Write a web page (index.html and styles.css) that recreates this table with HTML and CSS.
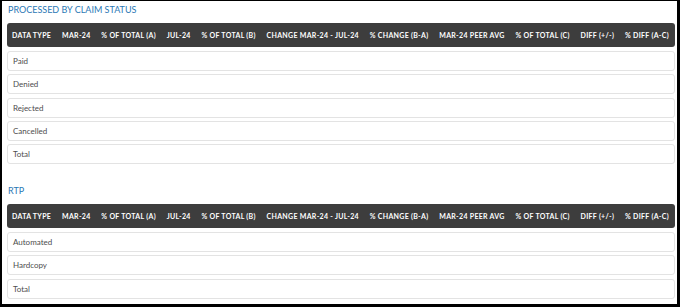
FILE: index.html
```html
<!DOCTYPE html>
<html>
<head>
<meta charset="utf-8">
<link rel="stylesheet" href="styles.css">
</head>
<body>
<div class="frame">
  <section class="section first">
    <h2 class="section-title">PROCESSED BY CLAIM STATUS</h2>
    <div class="head">
      <span>Data Type</span><span>Mar-24</span><span>% of Total (A)</span><span>Jul-24</span><span>% of Total (B)</span><span>Change Mar-24 - Jul-24</span><span>% Change (B-A)</span><span>Mar-24 Peer Avg</span><span>% of Total (C)</span><span>Diff (+/-)</span><span>% Diff (A-C)</span>
    </div>
    <div class="rows">
      <div class="row">Paid</div>
      <div class="row">Denied</div>
      <div class="row">Rejected</div>
      <div class="row">Cancelled</div>
      <div class="row">Total</div>
    </div>
  </section>
  <section class="section second">
    <h2 class="section-title">RTP</h2>
    <div class="head">
      <span>Data Type</span><span>Mar-24</span><span>% of Total (A)</span><span>Jul-24</span><span>% of Total (B)</span><span>Change Mar-24 - Jul-24</span><span>% Change (B-A)</span><span>Mar-24 Peer Avg</span><span>% of Total (C)</span><span>Diff (+/-)</span><span>% Diff (A-C)</span>
    </div>
    <div class="rows">
      <div class="row">Automated</div>
      <div class="row">Hardcopy</div>
      <div class="row">Total</div>
    </div>
  </section>
</div>
</body>
</html>
```
FILE: styles.css
```css
* { box-sizing: border-box; }
html, body { margin: 0; padding: 0; background: #fff; }
body { font-family: Lato, "Open Sans", sans-serif; }
.frame {
  width: 680px;
  height: 307px;
  border-style: solid;
  border-color: #000;
  border-width: 1px 3px 3px 2px;
  padding: 0 2px 0 5px;
  overflow: hidden;
}
.section { padding-top: 3px; }
.section.second { margin-top: 18px; }
.section-title {
  margin: 0 0 7px 1px;
  font-weight: 400;
  font-size: 9px;
  line-height: 12px;
  color: #2b78b5;
}
.head {
  display: flex;
  justify-content: space-between;
  align-items: center;
  height: 24px;
  background: #3d3d3d;
  border-radius: 3px;
  color: #fff;
  font-size: 7px;
  font-weight: 700;
  letter-spacing: 0.3px;
  text-transform: uppercase;
  white-space: nowrap;
}
.head span { padding: 0 5px; }
.head span:last-child { padding-right: 6px; }
.rows {
  display: flex;
  flex-direction: column;
  gap: 3.3px;
  margin-top: 4px;
}
.row {
  height: 20px;
  border: 1px solid #e3e3e3;
  border-radius: 3px;
  padding: 0 5px;
  display: flex;
  align-items: center;
  font-size: 8px;
  color: #4d4d4d;
}
```
